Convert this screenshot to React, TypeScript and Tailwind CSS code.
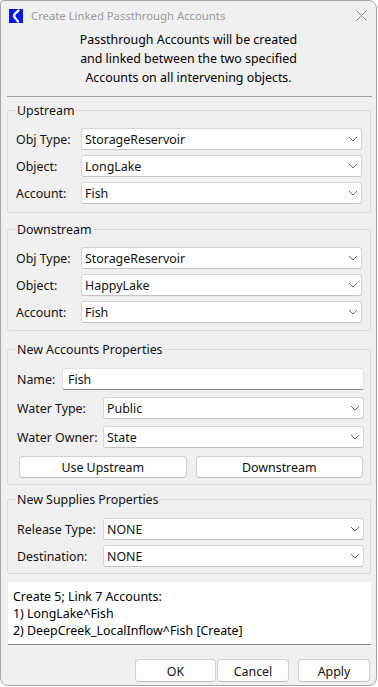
import React from "react";

function Chevron() {
  return (
    <svg width="10" height="6" viewBox="0 0 10 6" className="shrink-0">
      <path d="M1 1 L5 5 L9 1" stroke="#6a6a6a" fill="none" strokeWidth="1" />
    </svg>
  );
}

function Combo({ value }: { value: string }) {
  return (
    <div className="flex-1 h-[22px] bg-white border border-[#d6d6d6] border-b-[#c4c4c4] rounded-[3px] flex items-center pl-[3px] pr-[3px]">
      <span className="flex-1 leading-[20px] mt-[2px]">{value}</span>
      <Chevron />
    </div>
  );
}

function Row({ label, value, labelW }: { label: string; value: string; labelW: string }) {
  return (
    <div className="flex items-center h-[22px]">
      <span className={`${labelW} shrink-0 leading-[20px] mt-[2px]`}>{label}</span>
      <Combo value={value} />
    </div>
  );
}

function Group({
  title,
  children,
  className,
}: {
  title: string;
  children: React.ReactNode;
  className: string;
}) {
  return (
    <div className={`relative ml-[6px] w-[364px] border border-[#dcdcdc] rounded-[2px] ${className}`}>
      <span className="absolute -top-[9px] left-[8px] px-[1px] bg-[#f0f0f0] leading-[18px]">{title}</span>
      {children}
    </div>
  );
}

function Btn({ children, className }: { children: React.ReactNode; className: string }) {
  return (
    <div
      className={`h-[22px] bg-[#fdfdfd] border border-[#d0d0d0] border-b-[#bdbdbd] rounded-[4px] flex items-center justify-center leading-[20px] ${className}`}
    >
      <span className="mt-[2px]">{children}</span>
    </div>
  );
}

export default function App() {
  return (
    <div className="w-[378px] h-[687px] bg-white font-['Noto_Sans',sans-serif] text-[12.4px] text-[#111]">
      <div className="w-[377px] h-[686px] bg-[#f0f0f0] border border-[#a6a6a6] rounded-[8px] rounded-tl-[4px] flex flex-col overflow-hidden">
        {/* Title bar */}
        <div className="h-[28px] flex items-center pl-[8px] pr-[9px] shrink-0">
          <svg width="14" height="14" viewBox="0 0 14 14" className="shrink-0 mt-[1px]">
            <rect width="14" height="14" fill="#0a14f0" />
            <path
              d="M9.5 1.5 C7 3.5 5 5.5 5 7 C5 8.5 7 9.5 9 12.5"
              stroke="#ffffff"
              strokeWidth="2.4"
              fill="none"
              strokeLinecap="round"
            />
          </svg>
          <span className="ml-[8px] text-[11.3px] text-[#9a9a9a] leading-[16px] flex-1 mt-[1px]">
            Create Linked Passthrough Accounts
          </span>
          <svg width="11" height="11" viewBox="0 0 11 11" className="shrink-0 mt-[1px]">
            <path d="M0.5 0.5 L10.5 10.5 M10.5 0.5 L0.5 10.5" stroke="#8a8a8a" strokeWidth="1" />
          </svg>
        </div>

        {/* Description */}
        <div className="h-[57px] pt-[1px] text-center leading-[19px] text-black shrink-0">
          <div>Passthrough Accounts will be created</div>
          <div>and linked between the two specified</div>
          <div>Accounts on all intervening objects.</div>
        </div>

        {/* Separator */}
        <div className="mt-[10px] ml-[6px] w-[365px] h-[1px] bg-[#a0a0a0] shrink-0" />

        {/* Upstream */}
        <Group title="Upstream" className="mt-[13px] pt-[17px] pb-[8px] pl-[8px] pr-[8px] shrink-0">
          <div className="flex flex-col gap-[5px]">
            <Row label="Obj Type:" value="StorageReservoir" labelW="w-[65px]" />
            <Row label="Object:" value="LongLake" labelW="w-[65px]" />
            <Row label="Account:" value="Fish" labelW="w-[65px]" />
          </div>
        </Group>

        {/* Downstream */}
        <Group title="Downstream" className="mt-[16px] pt-[17px] pb-[7px] pl-[8px] pr-[8px] shrink-0">
          <div className="flex flex-col gap-[5px]">
            <Row label="Obj Type:" value="StorageReservoir" labelW="w-[65px]" />
            <Row label="Object:" value="HappyLake" labelW="w-[65px]" />
            <Row label="Account:" value="Fish" labelW="w-[65px]" />
          </div>
        </Group>

        {/* New Accounts Properties */}
        <Group title="New Accounts Properties" className="mt-[18px] pt-[18px] pb-[6px] pl-[9px] pr-[6px] shrink-0">
          <div className="flex flex-col">
            <div className="flex items-center h-[22px]">
              <span className="w-[45px] shrink-0 leading-[20px] mt-[2px]">Name:</span>
              <div className="flex-1 h-[22px] bg-white border border-[#e2e2e2] border-b-[#8a8a8a] rounded-[3px] flex items-center pl-[5px] leading-[20px]">
                <span className="mt-[2px]">Fish</span>
              </div>
            </div>
            <div className="mt-[7px]">
              <Row label="Water Type:" value="Public" labelW="w-[86px]" />
            </div>
            <div className="mt-[7px]">
              <Row label="Water Owner:" value="State" labelW="w-[86px]" />
            </div>
            <div className="mt-[8px] flex gap-[9px] pl-[2px] pr-[1px]">
              <Btn className="flex-1">Use Upstream</Btn>
              <Btn className="flex-1">Downstream</Btn>
            </div>
          </div>
        </Group>

        {/* New Supplies Properties */}
        <Group title="New Supplies Properties" className="mt-[14px] pt-[18px] pb-[6px] pl-[9px] pr-[6px] shrink-0">
          <div className="flex flex-col gap-[5px]">
            <Row label="Release Type:" value="NONE" labelW="w-[86px]" />
            <Row label="Destination:" value="NONE" labelW="w-[86px]" />
          </div>
        </Group>

        {/* Summary box */}
        <div className="mt-[8px] ml-[7px] w-[363px] h-[63px] bg-white border-b border-b-[#8a8a8a] pt-[6px] pl-[5px] leading-[17px] text-black shrink-0">
          <div>Create 5; Link 7 Accounts:</div>
          <div>1) LongLake^Fish</div>
          <div>2) DeepCreek_LocalInflow^Fish [Create]</div>
        </div>

        {/* Buttons */}
        <div className="mt-[14px] flex justify-end pr-[6px] shrink-0">
          <Btn className="w-[81px] h-[23px]">OK</Btn>
          <Btn className="ml-[1px] w-[72px] h-[23px]">Cancel</Btn>
          <Btn className="ml-[9px] w-[72px] h-[23px]">Apply</Btn>
        </div>
      </div>
    </div>
  );
}
